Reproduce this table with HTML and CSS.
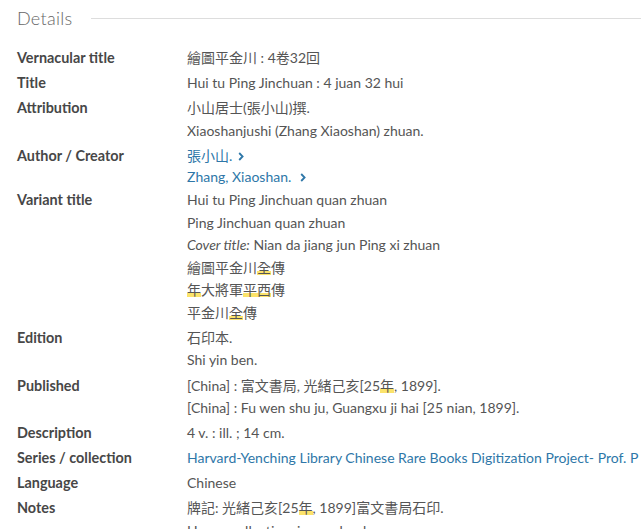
FILE: index.html
```html
<!DOCTYPE html>
<html lang="en">
<head>
<meta charset="utf-8">
<link rel="stylesheet" href="styles.css">
</head>
<body>
<section class="details">
  <div class="heading">
    <h2>Details</h2>
    <span class="rule"></span>
  </div>
  <dl class="fields">
    <div class="row"><dt>Vernacular title</dt><dd><span class="line">繪圖平金川 : 4卷32回</span></dd></div>
    <div class="row"><dt>Title</dt><dd><span class="line">Hui tu Ping Jinchuan : 4 juan 32 hui</span></dd></div>
    <div class="row"><dt>Attribution</dt><dd><span class="line">小山居士(張小山)撰.</span><span class="line">Xiaoshanjushi (Zhang Xiaoshan) zhuan.</span></dd></div>
    <div class="row author"><dt>Author / Creator</dt><dd><a class="line link">張小山. <svg class="chev" width="6" height="9" viewBox="0 0 6 9"><path d="M1.2 1 L4.6 4.5 L1.2 8" fill="none" stroke="currentColor" stroke-width="1.8"/></svg></a><a class="line link">Zhang, Xiaoshan. &nbsp;<svg class="chev" width="6" height="9" viewBox="0 0 6 9"><path d="M1.2 1 L4.6 4.5 L1.2 8" fill="none" stroke="currentColor" stroke-width="1.8"/></svg></a></dd></div>
    <div class="row"><dt>Variant title</dt><dd><span class="line">Hui tu Ping Jinchuan quan zhuan</span><span class="line">Ping Jinchuan quan zhuan</span><span class="line"><em>Cover title:</em> Nian da jiang jun Ping xi zhuan</span><span class="line">繪圖平金川<mark>全</mark>傳</span><span class="line"><mark>年</mark>大將軍<mark>平西</mark>傳</span><span class="line">平金川<mark>全</mark>傳</span></dd></div>
    <div class="row"><dt>Edition</dt><dd><span class="line">石印本.</span><span class="line">Shi yin ben.</span></dd></div>
    <div class="row"><dt>Published</dt><dd><span class="line">[China] : 富文書局, 光緒己亥[25<mark>年</mark>, 1899].</span><span class="line">[China] : Fu wen shu ju, Guangxu ji hai [25 nian, 1899].</span></dd></div>
    <div class="row"><dt>Description</dt><dd><span class="line">4 v. : ill. ; 14 cm.</span></dd></div>
    <div class="row"><dt>Series / collection</dt><dd><a class="line link">Harvard-Yenching Library Chinese Rare Books Digitization Project- Prof. P</a></dd></div>
    <div class="row"><dt>Language</dt><dd><span class="line">Chinese</span></dd></div>
    <div class="row"><dt>Notes</dt><dd><span class="line">牌記: 光緒己亥[25<mark>年</mark>, 1899]富文書局石印.</span><span class="line">Hanan collection, in rare books room.</span></dd></div>
  </dl>
</section>
</body>
</html>
```
FILE: styles.css
```css
html, body {
  margin: 0;
  padding: 0;
  background: #fff;
  overflow: hidden;
}
body {
  font-family: "Lato", "Noto Sans CJK TC", sans-serif;
  font-size: 14px;
  color: #555;
}
.details {
  padding: 0 0 0 17px;
}
.heading {
  display: flex;
  align-items: center;
  gap: 18px;
  height: 36px;
}
.heading h2 {
  margin: 0;
  font-weight: 300;
  font-size: 18px;
  color: #666;
  letter-spacing: 0.3px;
}
.rule {
  flex: 1;
  height: 1px;
  background: #ddd;
}
.fields {
  margin: 11px 0 0 0;
}
.row {
  display: grid;
  grid-template-columns: 170px 1fr;
  padding-bottom: 2.6px;
}
dt {
  font-weight: 700;
  font-size: 14.4px;
  color: #474747;
  line-height: 22.5px;
}
dd {
  margin: 0;
  display: flex;
  flex-direction: column;
  min-width: 0;
}
.line {
  display: block;
  line-height: 22.5px;
  white-space: nowrap;
}
.author .line {
  line-height: 21px;
}
.link {
  color: #2e77a8;
  text-decoration: none;
}
.chev {
  vertical-align: -0.5px;
  margin-left: 2px;
}
em {
  font-style: italic;
}
mark {
  color: inherit;
  background: linear-gradient(to bottom, transparent 72%, #fbe36b 72%, #fbe36b 92%, transparent 92%);
}
```
